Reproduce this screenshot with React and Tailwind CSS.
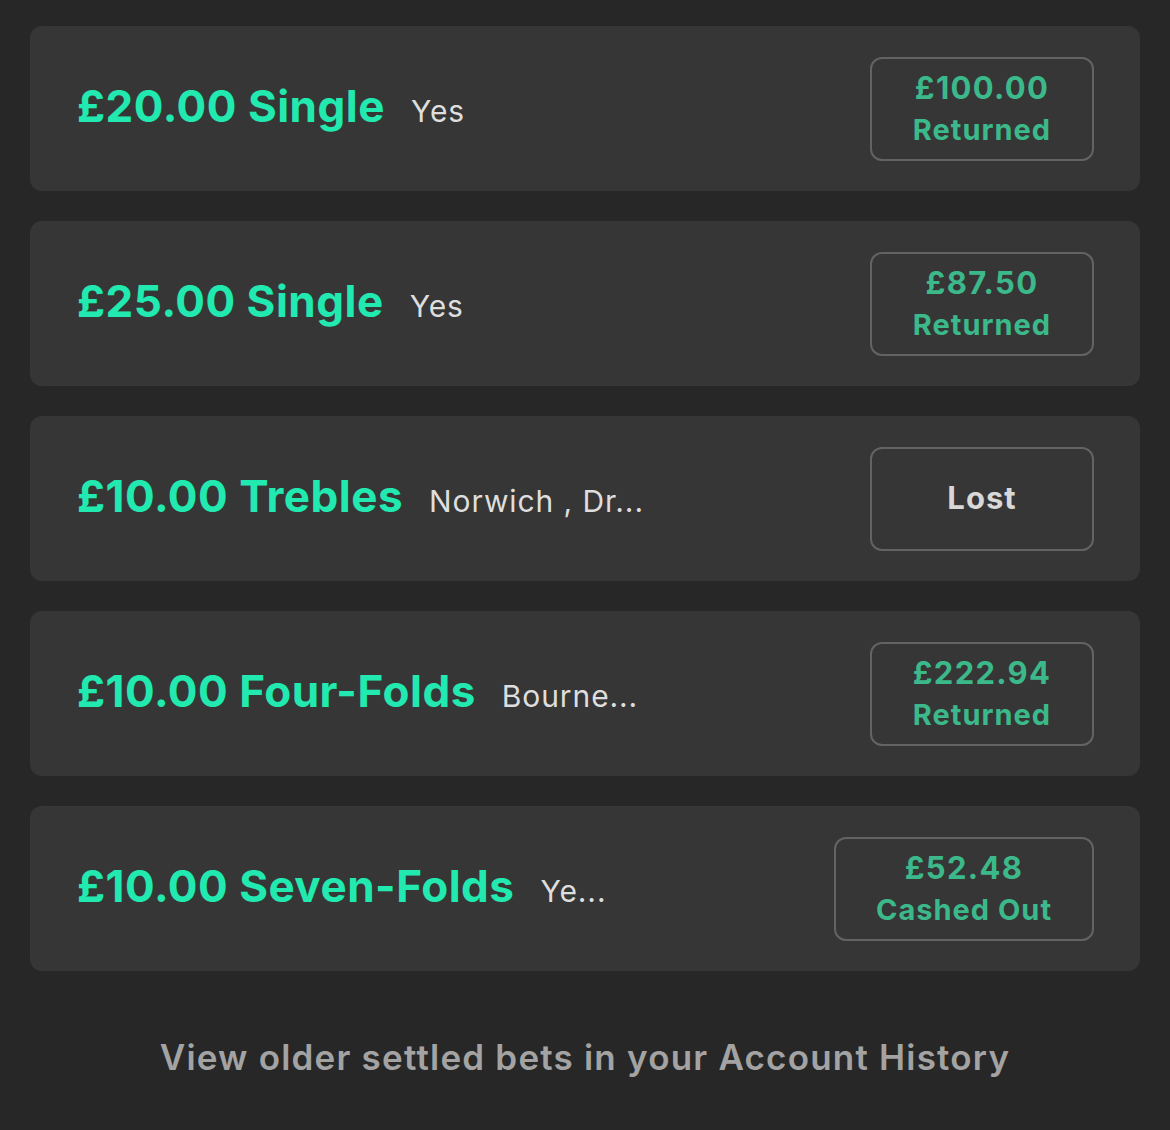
const bets = [
  { stake: '£20.00', type: 'Single', detail: 'Yes', amount: '£100.00', status: 'Returned' },
  { stake: '£25.00', type: 'Single', detail: 'Yes', amount: '£87.50', status: 'Returned' },
  { stake: '£10.00', type: 'Trebles', detail: 'Norwich , Dr...', status: 'Lost' },
  { stake: '£10.00', type: 'Four-Folds', detail: 'Bourne...', amount: '£222.94', status: 'Returned' },
  { stake: '£10.00', type: 'Seven-Folds', detail: 'Ye...', amount: '£52.48', status: 'Cashed Out' },
];

function StatusBadge({ amount, status }) {
  return (
    <div className="flex h-[104px] min-w-[224px] shrink-0 flex-col items-center justify-center rounded-[12px] border-2 border-[#636363] px-10">
      {amount ? (
        <>
          <span className="text-[31px] font-bold leading-[42px] tracking-[1.3px] text-[#3cb98a]">{amount}</span>
          <span className="text-[29px] font-bold leading-[42px] tracking-[1px] text-[#3cb98a]">{status}</span>
        </>
      ) : (
        <span className="text-[31px] font-bold tracking-[1px] text-[#d8d8d8]">{status}</span>
      )}
    </div>
  );
}

export default function App() {
  return (
    <main className="min-h-[1130px] bg-[#272727] px-[30px] pt-[26px] font-['Inter',sans-serif]">
      <div className="flex flex-col gap-[30px]">
        {bets.map((bet, i) => (
          <div
            key={i}
            className="flex h-[165px] items-center justify-between rounded-[12px] bg-[#363636] pl-[47px] pr-[46px]"
          >
            <div className="mb-[6px] flex min-w-0 items-baseline gap-[26px] whitespace-nowrap">
              <span className="text-[44px] font-bold tracking-[0.5px] text-[#21e9af]">
                {bet.stake} {bet.type}
              </span>
              <span className="text-[30px] tracking-[0.9px] text-[#dedede]">{bet.detail}</span>
            </div>
            <StatusBadge amount={bet.amount} status={bet.status} />
          </div>
        ))}
      </div>
      <p className="pt-[60px] text-center text-[35px] font-semibold tracking-[1.2px] text-[#a3a3a3]">
        View older settled bets in your Account History
      </p>
    </main>
  );
}
